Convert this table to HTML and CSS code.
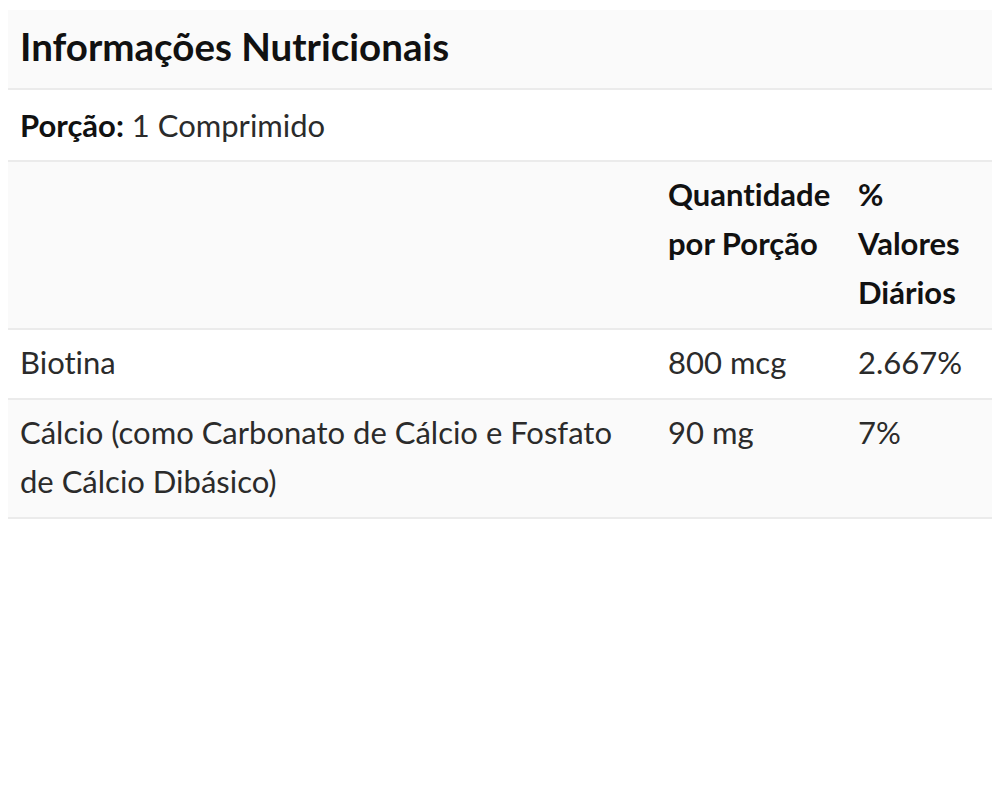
FILE: index.html
```html
<!doctype html>
<html lang="pt">
<head>
	<meta charset="UTF-8">
	<title>Informações Nutricionais</title>
	<link rel="stylesheet" href="styles.css">
</head>
<body>
	<div id="nutri">
		<h2 class="title">Informações Nutricionais</h2>
		<p class="serving"><b>Porção:</b> 1 Comprimido</p>
		<table class="facts">
			<thead>
				<tr>
					<th class="name"></th>
					<th class="qty">Quantidade por Porção</th>
					<th class="dv">% Valores Diários</th>
				</tr>
			</thead>
			<tbody>
				<tr>
					<td>Biotina</td>
					<td>800 mcg</td>
					<td>2.667%</td>
				</tr>
				<tr class="alt">
					<td>Cálcio (como Carbonato de Cálcio e Fosfato de Cálcio Dibásico)</td>
					<td>90 mg</td>
					<td>7%</td>
				</tr>
			</tbody>
		</table>
	</div>
</body>
</html>
```

FILE: styles.css
```css
*{
	margin: 0;
	padding: 0;
	box-sizing: border-box;
}
body{
	background: #fff;
	font-family: Lato, "Open Sans", sans-serif;
	font-variant-ligatures: none;
	color: #2b2b2b;
	padding: 10px 3px 0 8px;
}
#nutri{
	width: 984px;
}
.title{
	background: #fafafa;
	border-bottom: 2px solid #ebebeb;
	color: #111;
	font-size: 38.5px;
	font-weight: 700;
	line-height: 49px;
	padding: 12px 12px 17px;
}
.serving{
	border-bottom: 2px solid #ebebeb;
	font-size: 31px;
	line-height: 49px;
	padding: 11px 12px 10px;
}
.serving b{
	color: #111;
}
.facts{
	width: 100%;
	border-collapse: collapse;
	font-size: 31px;
	line-height: 49px;
}
.facts th,
.facts td{
	text-align: left;
	vertical-align: top;
	padding: 8px 12px 11px;
	border-bottom: 2px solid #ebebeb;
}
.facts th{
	color: #111;
	font-weight: 700;
}
.facts thead tr,
.facts tr.alt{
	background: #fafafa;
}
.facts .qty{
	width: 190px;
}
.facts .dv{
	width: 146px;
}
```
